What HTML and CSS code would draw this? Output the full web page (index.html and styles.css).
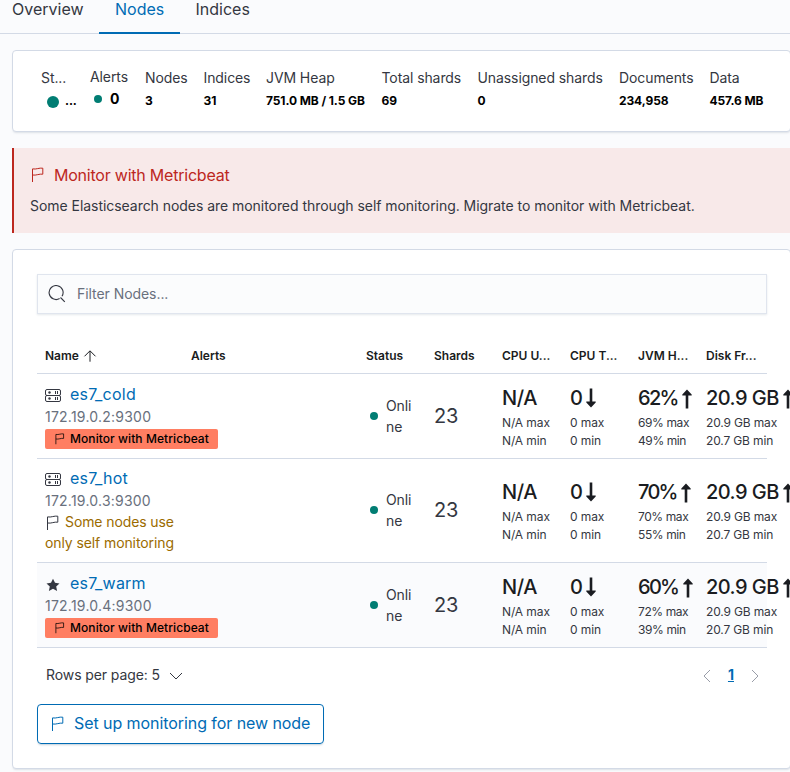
FILE: index.html
```html
<!DOCTYPE html>
<html lang="en">
<head>
<meta charset="utf-8">
<title>Elasticsearch nodes</title>
<link rel="stylesheet" href="styles.css">
</head>
<body>
<svg class="defs" width="0" height="0" aria-hidden="true">
  <symbol id="flag" viewBox="0 0 16 16"><path d="M2.500 15V1.900c3.700.7 6.800-1.300 10.300-.7v6c-3.400-.6-6.600 1.500-10.300.8" fill="none" stroke="currentColor"/></symbol>
  <symbol id="storage" viewBox="0 0 16 16"><g fill="none" stroke="currentColor"><rect x=".5" y="1.500" width="15" height="6" rx="1.500"/><rect x=".5" y="7.500" width="15" height="6" rx="1.500"/><path d="M10.500 3v3M12.500 3v3M10.500 9v3M12.500 9v3"/></g><circle cx="4.500" cy="4.500" r="1.200" fill="currentColor"/><circle cx="4.500" cy="10.500" r="1.200" fill="currentColor"/></symbol>
  <symbol id="star" viewBox="0 0 16 16"><path d="M8 1.800l2 4 4.500.6-3.300 3 .9 4.500L8 11.800l-4.100 2.100.9-4.500-3.300-3 4.500-.6z" fill="currentColor"/></symbol>
  <symbol id="up" viewBox="0 0 12 20"><path d="M6 .5l4.700 5v1H7.300v13H4.700v-13H1.300v-1z" fill="currentColor"/></symbol>
  <symbol id="down" viewBox="0 0 12 20"><path d="M6 19.500l4.700-5v-1H7.300V.500H4.700v13H1.300v1z" fill="currentColor"/></symbol>
</svg>

<nav class="tabs">
  <a class="tab">Overview</a>
  <a class="tab tab-active">Nodes</a>
  <a class="tab">Indices</a>
</nav>

<main>
  <section class="panel summary">
    <div class="stat"><span class="stat-label">St...</span><b class="stat-health"><i class="dot dot-large"></i>...</b></div>
    <div class="stat stat-alerts"><span class="stat-label">Alerts</span><b><i class="dot"></i>0</b></div>
    <div class="stat"><span class="stat-label">Nodes</span><b>3</b></div>
    <div class="stat"><span class="stat-label">Indices</span><b>31</b></div>
    <div class="stat"><span class="stat-label">JVM Heap</span><b>751.0 MB / 1.5 GB</b></div>
    <div class="stat"><span class="stat-label">Total shards</span><b>69</b></div>
    <div class="stat"><span class="stat-label">Unassigned shards</span><b>0</b></div>
    <div class="stat"><span class="stat-label">Documents</span><b>234,958</b></div>
    <div class="stat"><span class="stat-label">Data</span><b>457.6 MB</b></div>
  </section>

  <section class="callout">
    <h2><svg class="icon"><use href="#flag"/></svg>Monitor with Metricbeat</h2>
    <p>Some Elasticsearch nodes are monitored through self monitoring. Migrate to monitor with Metricbeat.</p>
  </section>

  <section class="panel listing">
    <div class="search">
      <svg width="18" height="18" viewBox="0 0 18 18" fill="none" stroke="#343741" stroke-width="1.1"><path d="M11.600 13.600A7 7 0 1 1 14 11.300"/><path d="M12.500 12.500l4.300 4.300"/></svg>
      <span>Filter Nodes...</span>
    </div>

    <div class="table">
      <div class="row head">
        <div>Name <svg class="sort" width="14" height="12" viewBox="0 0 14 12" fill="none" stroke="currentColor"><path d="M7 11.700V1M1.500 6.300L7 .8l5.500 5.500"/></svg></div>
        <div>Alerts</div><div>Status</div><div>Shards</div><div>CPU U...</div><div>CPU T...</div><div>JVM H...</div><div>Disk Fr...</div>
      </div>

      <div class="row">
        <div class="name">
          <div class="node"><svg class="icon"><use href="#storage"/></svg><a>es7_cold</a></div>
          <div class="address">172.19.0.2:9300</div>
          <div class="badge"><svg class="icon-small"><use href="#flag"/></svg>Monitor with Metricbeat</div>
        </div>
        <div></div>
        <div class="status"><i class="dot"></i><span>Online</span></div>
        <div class="shards">23</div>
        <div class="metric"><strong>N/A</strong><small>N/A max</small><small>N/A min</small></div>
        <div class="metric"><strong>0<svg class="trend"><use href="#down"/></svg></strong><small>0 max</small><small>0 min</small></div>
        <div class="metric percent"><strong>62%<svg class="trend trend-up"><use href="#up"/></svg></strong><small>69% max</small><small>49% min</small></div>
        <div class="metric disk"><strong>20.9 GB<svg class="trend trend-up"><use href="#up"/></svg></strong><small>20.9 GB max</small><small>20.7 GB min</small></div>
      </div>

      <div class="row row-tall">
        <div class="name">
          <div class="node"><svg class="icon"><use href="#storage"/></svg><a>es7_hot</a></div>
          <div class="address">172.19.0.3:9300</div>
          <div class="warning"><svg class="icon"><use href="#flag"/></svg>Some nodes use<br>only self monitoring</div>
        </div>
        <div></div>
        <div class="status"><i class="dot"></i><span>Online</span></div>
        <div class="shards">23</div>
        <div class="metric"><strong>N/A</strong><small>N/A max</small><small>N/A min</small></div>
        <div class="metric"><strong>0<svg class="trend"><use href="#down"/></svg></strong><small>0 max</small><small>0 min</small></div>
        <div class="metric percent"><strong>70%<svg class="trend trend-up"><use href="#up"/></svg></strong><small>70% max</small><small>55% min</small></div>
        <div class="metric disk"><strong>20.9 GB<svg class="trend trend-up"><use href="#up"/></svg></strong><small>20.9 GB max</small><small>20.7 GB min</small></div>
      </div>

      <div class="row row-hover">
        <div class="name">
          <div class="node"><svg class="icon"><use href="#star"/></svg><a>es7_warm</a></div>
          <div class="address">172.19.0.4:9300</div>
          <div class="badge"><svg class="icon-small"><use href="#flag"/></svg>Monitor with Metricbeat</div>
        </div>
        <div></div>
        <div class="status"><i class="dot"></i><span>Online</span></div>
        <div class="shards">23</div>
        <div class="metric"><strong>N/A</strong><small>N/A max</small><small>N/A min</small></div>
        <div class="metric"><strong>0<svg class="trend"><use href="#down"/></svg></strong><small>0 max</small><small>0 min</small></div>
        <div class="metric percent"><strong>60%<svg class="trend trend-up"><use href="#up"/></svg></strong><small>72% max</small><small>39% min</small></div>
        <div class="metric disk"><strong>20.9 GB<svg class="trend trend-up"><use href="#up"/></svg></strong><small>20.9 GB max</small><small>20.7 GB min</small></div>
      </div>
    </div>

    <div class="pager">
      <span class="page-size">Rows per page: 5</span>
      <svg class="chevron" width="14" height="8" viewBox="0 0 14 8" fill="none" stroke="#343741"><path d="M1 1l6 6 6-6"/></svg>
      <svg class="previous" width="8" height="14" viewBox="0 0 8 14" fill="none" stroke="#999da8"><path d="M7 1L1 7l6 6"/></svg>
      <a class="page">1</a>
      <svg width="8" height="14" viewBox="0 0 8 14" fill="none" stroke="#999da8"><path d="M1 1l6 6-6 6"/></svg>
    </div>

    <a class="button"><svg class="icon"><use href="#flag"/></svg><span>Set up monitoring for new node</span></a>
  </section>
</main>
</body>
</html>
```

FILE: styles.css
```css
* { box-sizing: border-box; }
body {
  margin: 0;
  height: 772px;
  overflow: hidden;
  background: #fafbfd;
  color: #343741;
  font: 14px/21px Inter, "Liberation Sans", sans-serif;
}
.defs { position: absolute; }
svg { flex: none; }
a { color: #006bb4; }
.icon { width: 16px; height: 16px; }
.icon-small { width: 12px; height: 12px; }

.tabs {
  display: flex;
  height: 34px;
  padding-left: 12px;
  border-bottom: 1px solid #d3dae6;
  font-size: 16px;
  line-height: 18px;
}
.tab { height: 34px; color: #343741; }
.tab-active {
  width: 81px;
  margin: 0 16px 0 15px;
  padding-left: 16.500px;
  border-bottom: 2px solid #006bb4;
  color: #006bb4;
}

main { width: 779px; margin-left: 12px; }
.panel {
  background: #fff;
  border: 1px solid #d3dae6;
  border-radius: 4px;
  box-shadow: 0 2px 2px -1px rgba(152, 162, 179, .3);
}
.summary {
  display: grid;
  grid-template-columns: 49px 55px 58.500px 62.500px 115.500px 96px 141.500px 90.500px 80px;
  height: 82px;
  margin-top: 16px;
  padding: 16px 0 0 28px;
  letter-spacing: -.09px;
  white-space: nowrap;
}
.stat { display: flex; flex-direction: column; }
.stat b { display: flex; align-items: center; height: 24px; font-size: 12px; font-weight: 700; color: #000; }
.stat-health { padding-right: 1px; }
.stat-alerts { margin-top: -1px; }
.stat-alerts b { height: 22px; font-size: 14px; }
.stat-alerts .dot { margin: 1px 8px 0 4px; }
.dot { display: block; flex: none; width: 8px; height: 8px; border-radius: 50%; background: #017d73; }
.dot-large { width: 12px; height: 12px; margin: 3px 6px 0; }

.callout {
  height: 85px;
  margin: 16px 0;
  padding: 15px 16px;
  border-left: 2px solid #bd271e;
  background: #f8e9e9;
}
.callout h2 {
  display: flex;
  align-items: center;
  gap: 8px;
  margin: 0;
  color: #bd271e;
  font-size: 16px;
  font-weight: 400;
  letter-spacing: -.22px;
  line-height: 24px;
}
.callout p { margin: 8px 0 0; letter-spacing: -.045px; white-space: nowrap; }

.listing { height: 520px; padding: 24px 23px 0 24px; }
.search {
  display: flex;
  align-items: center;
  gap: 11px;
  height: 40px;
  padding: 0 0 2px 10px;
  border: 1px solid #e0e5ee;
  background: #fbfcfd;
  box-shadow: 0 1px 2px rgba(152, 162, 179, .25);
  color: #69707d;
  letter-spacing: -.06px;
}
.search svg { margin-top: 2px; }

.table { width: 730px; margin-top: 24px; }
.row {
  display: grid;
  grid-template-columns: 146px 175px repeat(5, 68px) 69px;
  align-items: center;
  border-bottom: 1px solid #d3dae6;
}
.row > div { min-width: 0; padding-left: 8px; white-space: nowrap; }
.head { height: 36px; color: #1a1c21; font-size: 12px; font-weight: 600; }
.sort { margin-left: 1px; vertical-align: -2px; }
.row-hover { background: #fafbfd; }
.row .name { padding: 8px 0 8px 8px; }
.row-tall > div { padding-bottom: 1px; }
.row-tall .name { padding: 7px 0 9px 8px; }
.node { display: flex; align-items: center; gap: 9px; height: 24px; font-size: 16px; letter-spacing: .24px; }
.node .icon { margin-top: 4px; }
.address { color: #69707d; letter-spacing: .23px; }
.badge {
  display: flex;
  align-items: center;
  gap: 4px;
  width: 173px;
  height: 20px;
  margin: 2px 0 1px;
  padding: 0 0 1px 9px;
  border-radius: 2px;
  background: #ff7e62;
  color: #000;
  font-size: 12px;
  font-weight: 500;
  letter-spacing: .07px;
  line-height: 18px;
}
.badge .icon-small { margin-top: 1px; }
.warning { color: #9b6b00; letter-spacing: -.1px; }
.warning .icon { margin-right: 4px; color: #343741; vertical-align: -4px; }
.row .status { display: flex; align-items: center; gap: 8px; padding-left: 12px; }
.status span { width: 27px; margin-top: -1px; letter-spacing: -.1px; white-space: normal; word-break: break-all; }
.status .dot { margin-bottom: 0; }
.row-tall .status span { margin-top: 0; }
.shards { font-size: 20px; letter-spacing: -.3px; }
.metric strong { display: flex; align-items: center; height: 32px; color: #1a1c21; font-size: 20px; font-weight: 500; letter-spacing: -.4px; }
.metric small { display: block; font-size: 12px; letter-spacing: -.1px; line-height: 18px; }
.percent strong { letter-spacing: -1.700px; }
.percent small { letter-spacing: -.4px; }
.disk strong { letter-spacing: -.55px; }
.disk small { letter-spacing: -.15px; }
.trend { width: 12px; height: 20px; margin-left: 2.500px; }
.percent .trend { margin: 2px 0 0 3.500px; }
.disk .trend { margin: 2px 0 0 3.500px; }

.pager { display: flex; align-items: center; height: 24px; margin-top: 16px; padding: 0 8px 0 9px; }
.page-size { margin-top: -3px; letter-spacing: -.09px; }
.chevron { margin-left: 9px; }
.previous { margin-left: auto; }
.page { margin: -3px 17px 0; font-weight: 700; text-decoration: underline; }
.button {
  display: flex;
  align-items: center;
  gap: 8px;
  width: 287px;
  height: 40px;
  margin-top: 16px;
  padding-left: 12px;
  border: 1px solid #006bb4;
  border-radius: 4px;
  box-shadow: 0 2px 2px -1px rgba(54, 97, 126, .3);
  font-size: 16px;
  letter-spacing: -.07px;
}
.button span { margin-top: -2px; }
```
